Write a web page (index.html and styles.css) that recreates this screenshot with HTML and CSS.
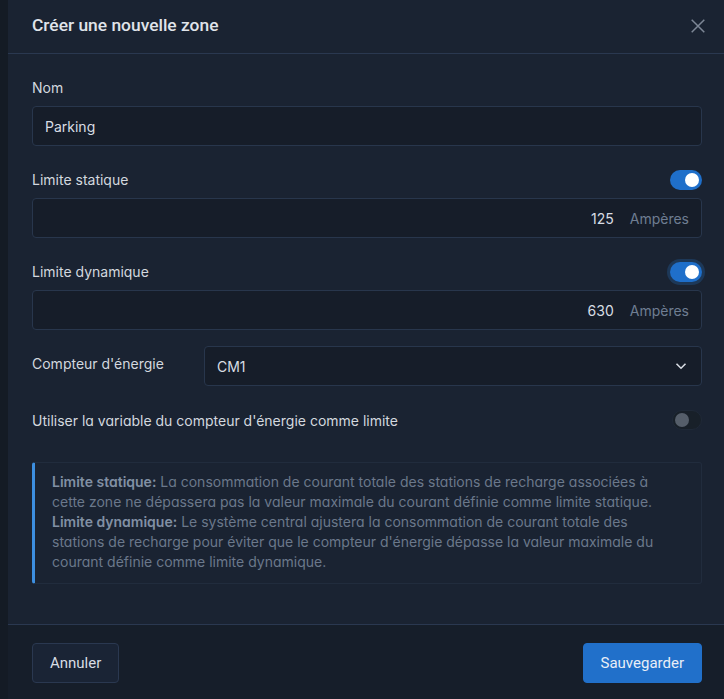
FILE: index.html
```html
<!DOCTYPE html>
<html lang="fr">

<head>
    <meta charset="UTF-8">
    <meta name="viewport" content="width=device-width, initial-scale=1.0">
    <title>Créer une nouvelle zone</title>
    <link rel="stylesheet" href="styles.css">
</head>

<body>
    <div class="modal">
        <div class="modal-header">
            <h2>Créer une nouvelle zone</h2>
            <button class="close" type="button" aria-label="Fermer">
                <svg width="14" height="14" viewBox="0 0 14 14">
                    <path d="M0.7 0.7L13.3 13.3M13.3 0.7L0.7 13.3" stroke="#7d8796" stroke-width="1.5" fill="none" />
                </svg>
            </button>
        </div>

        <div class="modal-body">
            <div class="field">
                <label class="label">Nom</label>
                <div class="input">Parking</div>
            </div>

            <div class="field">
                <div class="label-row">
                    <label class="label">Limite statique</label>
                    <span class="toggle on"></span>
                </div>
                <div class="input number">
                    <span class="value">125</span>
                    <span class="unit">Ampères</span>
                </div>
            </div>

            <div class="field last">
                <div class="label-row">
                    <label class="label">Limite dynamique</label>
                    <span class="toggle on focus"></span>
                </div>
                <div class="input number">
                    <span class="value">630</span>
                    <span class="unit">Ampères</span>
                </div>
            </div>

            <div class="field inline">
                <label class="label">Compteur d'énergie</label>
                <div class="input select">
                    <span>CM1</span>
                    <svg width="12" height="8" viewBox="0 0 12 8">
                        <path d="M1.5 1.8L6 6.2L10.5 1.8" stroke="#d8dde4" stroke-width="1.6" fill="none" />
                    </svg>
                </div>
            </div>

            <div class="switch-row">
                <span class="alt">Utiliser la variable du compteur d'énergie comme limite</span>
                <span class="toggle off"></span>
            </div>

            <div class="info">
                <p><b>Limite statique:</b> La consommation de courant totale des stations de recharge associées à<br>
                    cette zone ne dépassera pas la valeur maximale du courant définie comme limite statique.</p>
                <p><b>Limite dynamique:</b> Le système central ajustera la consommation de courant totale des<br>
                    stations de recharge pour éviter que le compteur d'énergie dépasse la valeur maximale du<br>
                    courant définie comme limite dynamique.</p>
            </div>
        </div>

        <div class="modal-footer">
            <button class="btn" type="button">Annuler</button>
            <button class="btn primary" type="button">Sauvegarder</button>
        </div>
    </div>
</body>

</html>
```

FILE: styles.css
```css
* {
    margin: 0;
    padding: 0;
    box-sizing: border-box;
}

html,
body {
    height: 100%;
}

body {
    background-color: #141b25;
    font-family: Inter, "Noto Sans", sans-serif;
    font-size: 14px;
    color: #d3d8df;
    padding-left: 8px;
    overflow: hidden;
}

.modal {
    background-color: #1a2332;
    height: 100%;
    display: flex;
    flex-direction: column;
}

.modal-header {
    height: 54px;
    display: flex;
    align-items: center;
    justify-content: space-between;
    padding: 0 19px 0 24px;
    border-bottom: 1px solid #2a3850;
}

.modal-header h2 {
    font-family: Roboto, sans-serif;
    font-size: 17.4px;
    font-weight: 500;
    color: #e0e4ea;
    margin-top: -4px;
}

.close {
    background: none;
    border: 0;
    width: 14px;
    height: 14px;
    display: flex;
    align-items: center;
    justify-content: center;
    margin-top: -2px;
}

.modal-body {
    flex: 1;
    padding: 24px 22px 0 24px;
}

.field {
    margin-bottom: 24px;
}

.field.last {
    margin-bottom: 16px;
}

.label {
    display: block;
    font-size: 14px;
    line-height: 20px;
    color: #d3d8df;
    margin-bottom: 8px;
}

.label-row {
    display: flex;
    justify-content: space-between;
    align-items: center;
    height: 20px;
    margin-bottom: 8px;
}

.label-row .label {
    margin-bottom: 0;
}

.input {
    height: 40px;
    background-color: #161d29;
    border: 1px solid #28364c;
    border-radius: 4px;
    display: flex;
    align-items: center;
    padding: 0 12px;
    color: #d8dde4;
    font-size: 14px;
}

.number {
    justify-content: flex-end;
}

.number .value {
    margin-right: 16px;
}

.number .unit {
    color: #6f7d92;
}

.inline {
    display: flex;
    align-items: flex-start;
    margin-bottom: 24px;
}

.inline .label {
    width: 172px;
    margin-top: 8px;
    margin-bottom: 0;
}

.select {
    flex: 1;
    justify-content: space-between;
    padding-right: 14px;
}

.switch-row {
    display: flex;
    justify-content: space-between;
    align-items: center;
    height: 20px;
    margin-bottom: 32px;
}

.alt,
.info {
    font-feature-settings: "cv11";
}

.toggle {
    position: relative;
    display: inline-block;
    width: 32px;
    height: 20px;
    border-radius: 10px;
}

.toggle::after {
    content: "";
    position: absolute;
    top: 3px;
    width: 14px;
    height: 14px;
    border-radius: 50%;
}

.toggle.on {
    background-color: #1f6fca;
}

.toggle.on::after {
    right: 3px;
    background-color: #fff;
}

.toggle.focus {
    box-shadow: 0 0 0 3px #1d3858;
}

.toggle.off {
    width: 30px;
    background-color: #182029;
    border: 1px solid #1f2937;
}

.toggle.off::after {
    top: 2px;
    left: 2px;
    background-color: #555e6a;
}

.info {
    border: 1px solid #212c3d;
    border-left: 3px solid #3d8fe0;
    border-radius: 3px;
    padding: 9px 12px 11px 17px;
    color: #6b788b;
    font-size: 14px;
    line-height: 20px;
    white-space: nowrap;
    overflow: hidden;
}

.info b {
    color: #8190a4;
    font-weight: 600;
}

.modal-footer {
    background-color: #161e2a;
    border-top: 1px solid #2a3850;
    height: 75px;
    display: flex;
    justify-content: space-between;
    align-items: flex-start;
    padding: 18px 22px 0 24px;
}

.btn {
    font-family: Roboto, sans-serif;
    font-size: 15px;
    height: 40px;
    padding: 0 17px;
    border-radius: 4px;
    border: 1px solid #2a3850;
    background-color: #1a2435;
    color: #d8dde4;
}

.btn.primary {
    background-color: #2170ca;
    border-color: #2170ca;
    color: #e8eef7;
}
```
